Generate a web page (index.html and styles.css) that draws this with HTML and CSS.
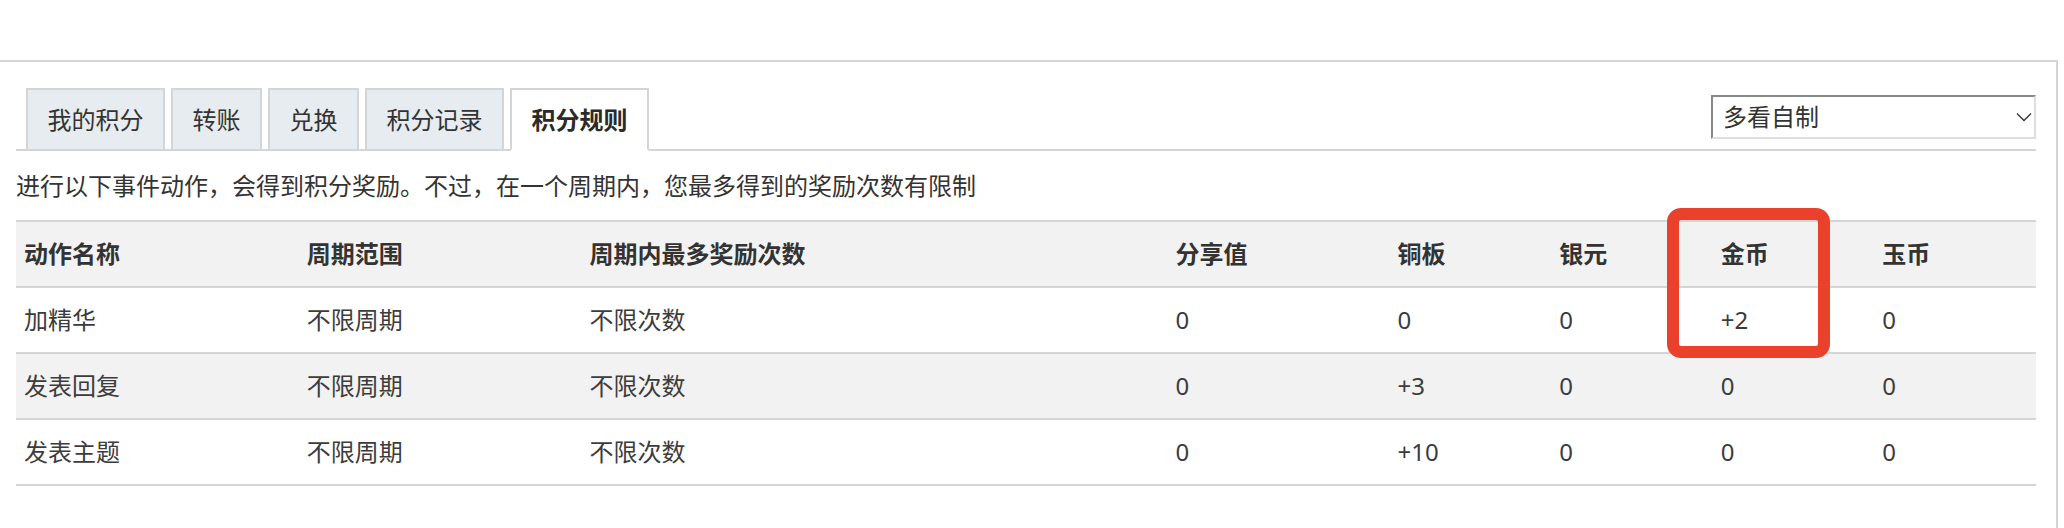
FILE: index.html
```html
<!DOCTYPE html>
<html lang="zh-CN">
<head>
<meta charset="utf-8">
<title>积分规则</title>
<link rel="stylesheet" href="styles.css">
</head>
<body>
<div class="panel">
  <div class="tabbar">
    <ul class="tabs">
      <li class="tab">我的积分</li>
      <li class="tab">转账</li>
      <li class="tab">兑换</li>
      <li class="tab">积分记录</li>
      <li class="tab tab-active">积分规则</li>
    </ul>
    <div class="select">
      <span class="select-text">多看自制</span>
      <svg class="chevron" width="16" height="10" viewBox="0 0 16 10"><path d="M1 1.5 L8 8.5 L15 1.5" fill="none" stroke="#333" stroke-width="1.3"/></svg>
    </div>
  </div>
  <p class="desc">进行以下事件动作，会得到积分奖励。不过，在一个周期内，您最多得到的奖励次数有限制</p>
  <div class="table-wrap">
    <table class="rules">
      <colgroup>
        <col class="c14"><col class="c14"><col class="c29"><col class="c11"><col class="c8"><col class="c8"><col class="c8"><col class="c8">
      </colgroup>
      <thead>
        <tr><th>动作名称</th><th>周期范围</th><th>周期内最多奖励次数</th><th>分享值</th><th>铜板</th><th>银元</th><th>金币</th><th>玉币</th></tr>
      </thead>
      <tbody>
        <tr><td>加精华</td><td>不限周期</td><td>不限次数</td><td>0</td><td>0</td><td>0</td><td>+2</td><td>0</td></tr>
        <tr class="alt"><td>发表回复</td><td>不限周期</td><td>不限次数</td><td>0</td><td>+3</td><td>0</td><td>0</td><td>0</td></tr>
        <tr><td>发表主题</td><td>不限周期</td><td>不限次数</td><td>0</td><td>+10</td><td>0</td><td>0</td><td>0</td></tr>
      </tbody>
    </table>
    <div class="highlight"></div>
  </div>
</div>
</body>
</html>
```

FILE: styles.css
```css
html, body {
  margin: 0;
  padding: 0;
  background: #fff;
}
body {
  font-family: "Noto Sans", "Noto Sans CJK SC", sans-serif;
  color: #3c3c3c;
  font-size: 24px;
}
.panel {
  margin-top: 60px;
  width: 2058px;
  height: 468px;
  box-sizing: border-box;
  border-top: 2px solid #d5d5d5;
  border-right: 2px solid #d5d5d5;
  padding: 26px 20px 0 16px;
}
.tabbar {
  display: flex;
  justify-content: space-between;
  align-items: flex-end;
  height: 63px;
  box-sizing: border-box;
  border-bottom: 2px solid #d5d5d5;
}
.tabs {
  list-style: none;
  margin: 0 0 -2px 0;
  padding: 0 0 0 10px;
  display: flex;
  gap: 6px;
}
.tab {
  height: 63px;
  box-sizing: border-box;
  border: 2px solid #d5d5d5;
  background: #e6ecef;
  padding: 0 19.5px;
  display: flex;
  align-items: center;
  font-size: 24px;
  line-height: 1;
  color: #333;
}
.tab-active {
  background: #fff;
  border-bottom-color: #fff;
  font-weight: bold;
  color: #2a2a2a;
}
.select {
  width: 325px;
  height: 44px;
  box-sizing: border-box;
  margin-bottom: 10px;
  border: 2px solid;
  border-color: #8a8a8a #dedede #dedede #8a8a8a;
  display: flex;
  align-items: center;
  justify-content: space-between;
  padding: 0 2px 0 10px;
  background: #fff;
  color: #333;
  font-size: 24px;
  line-height: 1;
}
.chevron {
  display: block;
}
.desc {
  margin: 0;
  height: 69px;
  display: flex;
  align-items: center;
  font-size: 24px;
  line-height: 1;
  color: #333;
}
.table-wrap {
  position: relative;
}
.rules {
  width: 100%;
  table-layout: fixed;
  border-collapse: separate;
  border-spacing: 0;
  border-top: 2px solid #d5d5d5;
}
.c14 { width: 14%; }
.c29 { width: 29%; }
.c11 { width: 11%; }
.c8 { width: 8%; }
.rules th,
.rules td {
  text-align: left;
  padding: 0 8px;
  height: 64px;
  line-height: 64px;
  border-bottom: 2px solid #d5d5d5;
  font-size: 24px;
  white-space: nowrap;
}
.rules th {
  background: #f2f2f2;
  font-weight: bold;
  color: #333;
}
.rules td {
  font-weight: normal;
  color: #3c3c3c;
}
.rules tr.alt td {
  background: #f2f2f2;
}
.highlight {
  position: absolute;
  left: 1651px;
  top: -12px;
  width: 163px;
  height: 150px;
  box-sizing: border-box;
  border: 12px solid #e9412b;
  border-radius: 14px;
}
```
